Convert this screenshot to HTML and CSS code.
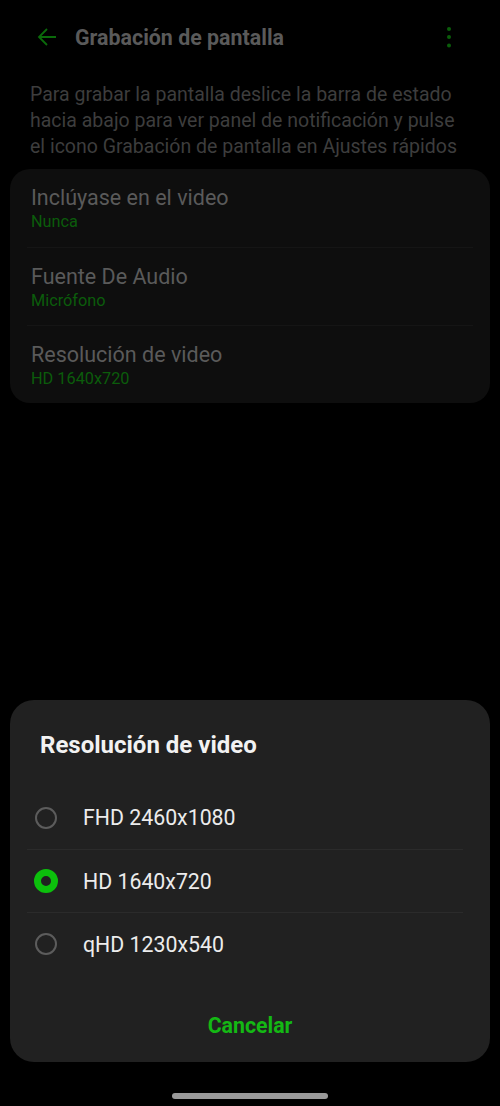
FILE: index.html
```html
<!DOCTYPE html>
<html lang="es">
<head>
<meta charset="utf-8">
<link rel="stylesheet" href="styles.css">
</head>
<body>
<div class="screen">
  <header class="appbar">
    <svg class="back" width="22" height="22" viewBox="0 0 22 22"><path d="M20 11H3M11 3L3 11l8 8" fill="none" stroke="#0a6a0a" stroke-width="1.8"/></svg>
    <h1 class="title">Grabación de pantalla</h1>
    <svg class="more" width="6" height="22" viewBox="0 0 6 22"><circle cx="3" cy="3" r="2" fill="#0a5e0a"/><circle cx="3" cy="11" r="2" fill="#0a5e0a"/><circle cx="3" cy="19.5" r="2" fill="#0a5e0a"/></svg>
  </header>
  <p class="desc">Para grabar la pantalla deslice la barra de estado hacia abajo para ver panel de notificación y pulse el icono Grabación de pantalla en Ajustes rápidos</p>
  <section class="card">
    <div class="item">
      <div class="item-title">Inclúyase en el video</div>
      <div class="item-sub">Nunca</div>
    </div>
    <div class="item">
      <div class="item-title">Fuente De Audio</div>
      <div class="item-sub">Micrófono</div>
    </div>
    <div class="item">
      <div class="item-title">Resolución de video</div>
      <div class="item-sub">HD 1640x720</div>
    </div>
  </section>
  <section class="sheet">
    <h2 class="sheet-title">Resolución de video</h2>
    <div class="options">
      <div class="option"><span class="radio"></span><span class="opt-label">FHD 2460x1080</span></div>
      <div class="option"><span class="radio checked"></span><span class="opt-label">HD 1640x720</span></div>
      <div class="option"><span class="radio"></span><span class="opt-label">qHD 1230x540</span></div>
    </div>
    <div class="actions"><span class="cancel">Cancelar</span></div>
  </section>
  <div class="homebar"><span class="pill"></span></div>
</div>
</body>
</html>
```
FILE: styles.css
```css
* { box-sizing: border-box; }
html, body { margin: 0; padding: 0; background: #000; }
body { font-family: Roboto, "Noto Sans", sans-serif; }
.screen {
  width: 500px;
  height: 1106px;
  display: flex;
  flex-direction: column;
  overflow: hidden;
}
.appbar {
  height: 74px;
  display: flex;
  align-items: center;
  padding: 0 0 0 36px;
}
.back { flex: none; }
.title {
  margin: 0 0 0 17px;
  font-size: 21.4px;
  font-weight: 700;
  color: #5a5a5a;
  flex: 1;
}
.more { margin-right: 48px; flex: none; }
.desc {
  margin: 8px 0 0 0;
  padding: 0 26px 0 30px;
  font-size: 19.5px;
  line-height: 26px;
  color: #3d3d3d;
}
.card {
  margin: 9px 10px 0;
  background: #0e0e0e;
  border-radius: 20px;
  padding: 0 17px;
}
.item {
  height: 78px;
  padding: 16px 0 0 4px;
}
.item + .item { border-top: 1px solid #151515; }
.item-title {
  font-size: 21.5px;
  line-height: 26px;
  color: #5a5a5a;
}
.item-sub {
  margin-top: 0;
  font-size: 16.3px;
  line-height: 21px;
  color: #0b5c0b;
}
.sheet {
  margin: auto 10px 0;
  height: 362px;
  background: #212121;
  border-radius: 24px;
  display: flex;
  flex-direction: column;
}
.sheet-title {
  margin: 0;
  padding: 31px 30px 26px;
  font-size: 24px;
  line-height: 29px;
  font-weight: 700;
  color: #f2f2f2;
}
.options { margin: 0 27px 0 17px; }
.option {
  height: 63px;
  display: flex;
  align-items: center;
}
.option + .option { border-top: 1px solid #2b2b2b; }
.radio {
  flex: none;
  width: 22px;
  height: 22px;
  margin-left: 8px;
  border: 2px solid #5c5c5c;
  border-radius: 50%;
}
.radio.checked {
  width: 24px;
  height: 24px;
  margin-left: 7px;
  border: 7px solid #0cc00c;
  background: #212121;
}
.opt-label {
  margin-left: 26px;
  font-size: 21.3px;
  color: #ececec;
}
.radio.checked + .opt-label { margin-left: 25px; }
.actions {
  margin-top: 28px;
  height: 44px;
  display: flex;
  align-items: center;
  justify-content: center;
}
.cancel {
  font-size: 21.3px;
  font-weight: 700;
  color: #14b814;
}
.homebar {
  height: 44px;
  display: flex;
  justify-content: center;
  padding-top: 31px;
}
.pill {
  width: 156px;
  height: 6px;
  border-radius: 3px;
  background: #999;
}
```
